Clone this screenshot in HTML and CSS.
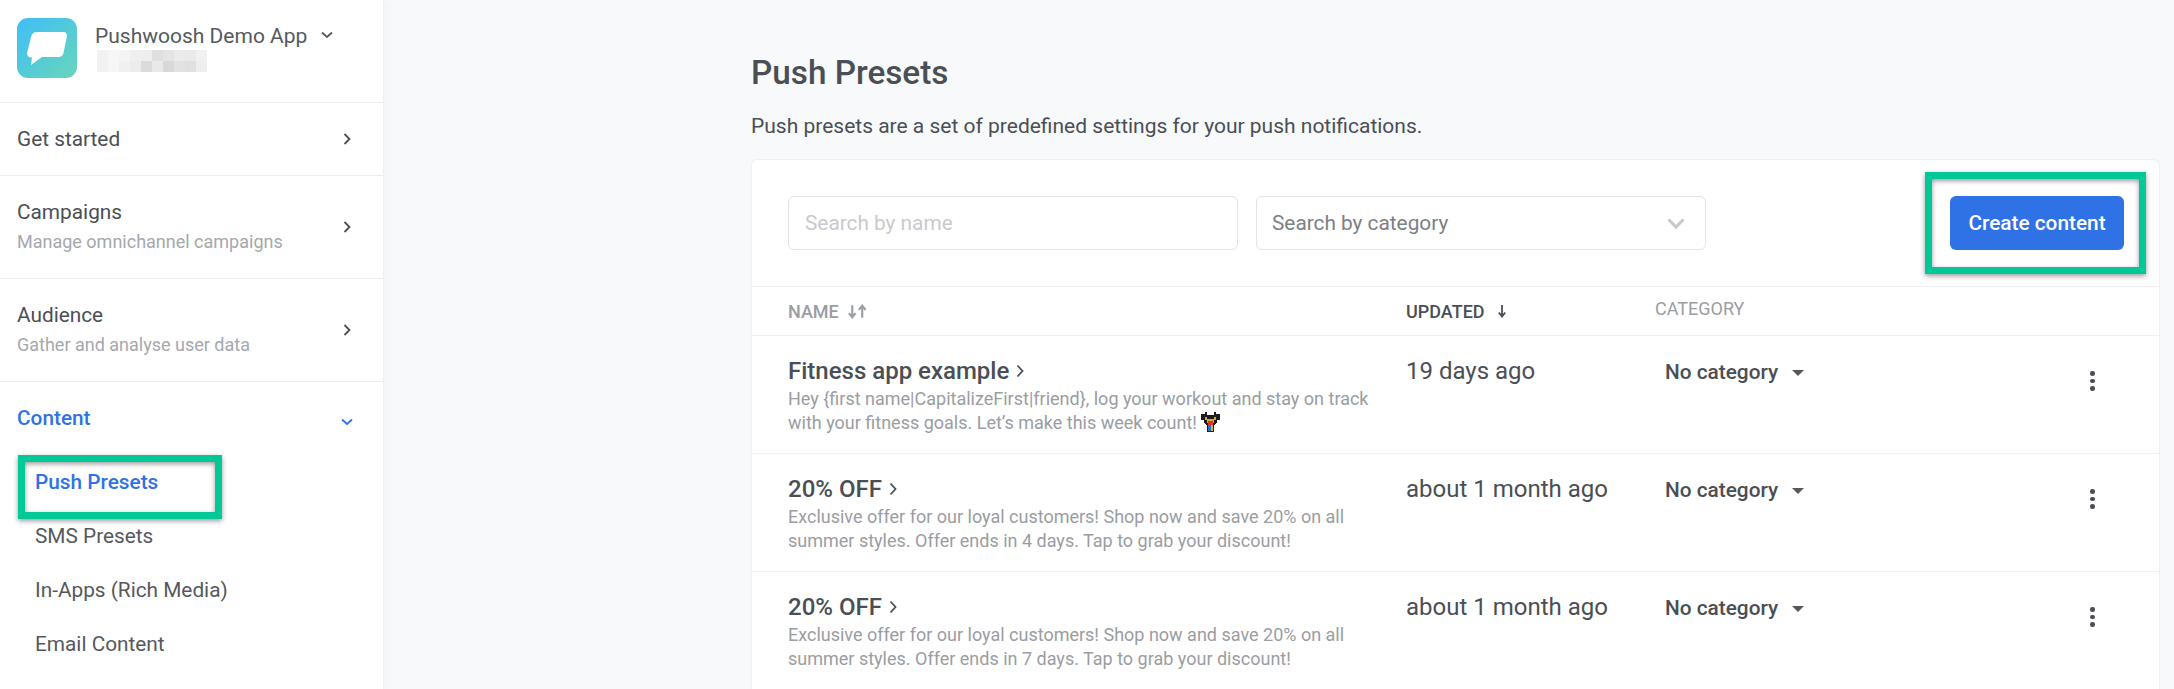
FILE: index.html
```html
<!DOCTYPE html>
<html lang="en">
<head>
<meta charset="utf-8">
<title>Push Presets</title>
<link rel="stylesheet" href="styles.css">
</head>
<body>
<div class="app">
  <aside class="sidebar">
    <header class="brand">
      <svg class="logo" viewBox="0 0 60 60" width="60" height="60">
        <defs><linearGradient id="lg" x1="0" y1="0" x2="1" y2="1"><stop offset="0" stop-color="#3fbef8"/><stop offset="1" stop-color="#68d6ba"/></linearGradient></defs>
        <rect width="60" height="60" rx="11" fill="url(#lg)"/>
        <path d="M20 14H46C49 14 50.500 16 49.800 19L46.500 35C45.900 37.800 44 39 41.500 39H25L14 47L15 39.500C11.500 39.500 9.700 37.500 10.200 34.500L14 19C14.800 15.800 17 14 20 14Z" fill="#fff"/>
      </svg>
      <div class="brand-text">
        <div class="brand-name">Pushwoosh Demo App
          <svg class="brand-caret" viewBox="0 0 12 8" width="12" height="8"><path d="M1 1.500L6 6L11 1.500" fill="none" stroke="#555a60" stroke-width="1.800"/></svg>
        </div>
        <svg class="mosaic" viewBox="0 0 10 2" width="112" height="22" shape-rendering="crispEdges">
          <rect x="0" y="0" width="1" height="1" fill="#f2f2f2"/><rect x="1" y="0" width="1" height="1" fill="#f6f6f6"/><rect x="2" y="0" width="1" height="1" fill="#f4f4f4"/><rect x="3" y="0" width="1" height="1" fill="#efefef"/><rect x="4" y="0" width="1" height="1" fill="#eeeeee"/><rect x="5" y="0" width="1" height="1" fill="#dfdfdf"/><rect x="6" y="0" width="1" height="1" fill="#e4e4e4"/><rect x="7" y="0" width="1" height="1" fill="#ebebeb"/><rect x="8" y="0" width="1" height="1" fill="#eaeaea"/><rect x="9" y="0" width="1" height="1" fill="#f1f1f1"/>
          <rect x="0" y="1" width="1" height="1" fill="#f1f1f1"/><rect x="1" y="1" width="1" height="1" fill="#f6f6f6"/><rect x="2" y="1" width="1" height="1" fill="#f0f0f0"/><rect x="3" y="1" width="1" height="1" fill="#ececec"/><rect x="4" y="1" width="1" height="1" fill="#dbdbdb"/><rect x="5" y="1" width="1" height="1" fill="#e9e9e9"/><rect x="6" y="1" width="1" height="1" fill="#d8d8d8"/><rect x="7" y="1" width="1" height="1" fill="#e2e2e2"/><rect x="8" y="1" width="1" height="1" fill="#e0e0e0"/><rect x="9" y="1" width="1" height="1" fill="#eeeeee"/>
        </svg>
      </div>
    </header>
    <nav>
      <a class="nav-item nav-plain"><span class="nav-label">Get started</span>
        <svg class="nav-chev" viewBox="0 0 8 12" width="8" height="12"><path d="M1.500 1L6.500 6L1.500 11" fill="none" stroke="#4a4f55" stroke-width="1.800"/></svg></a>
      <a class="nav-item nav-tall"><span class="nav-text"><span class="nav-label">Campaigns</span><span class="nav-sub">Manage omnichannel campaigns</span></span>
        <svg class="nav-chev" viewBox="0 0 8 12" width="8" height="12"><path d="M1.500 1L6.500 6L1.500 11" fill="none" stroke="#4a4f55" stroke-width="1.800"/></svg></a>
      <a class="nav-item nav-tall"><span class="nav-text"><span class="nav-label">Audience</span><span class="nav-sub">Gather and analyse user data</span></span>
        <svg class="nav-chev" viewBox="0 0 8 12" width="8" height="12"><path d="M1.500 1L6.500 6L1.500 11" fill="none" stroke="#4a4f55" stroke-width="1.800"/></svg></a>
      <div class="nav-open">
        <div class="nav-open-head"><span class="nav-label nav-active">Content</span>
          <svg class="nav-down" viewBox="0 0 12 8" width="12" height="8"><path d="M1 1.500L6 6L11 1.500" fill="none" stroke="#2f72e6" stroke-width="1.800"/></svg></div>
        <ul class="subnav">
          <li class="subnav-on">Push Presets<span class="mark mark-nav"></span></li>
          <li>SMS Presets</li>
          <li>In-Apps (Rich Media)</li>
          <li>Email Content</li>
        </ul>
      </div>
    </nav>
  </aside>
  <main class="main">
    <h1 class="title">Push Presets</h1>
    <p class="lead">Push presets are a set of predefined settings for your push notifications.</p>
    <section class="card">
      <div class="toolbar">
        <div class="field field-input">Search by name</div>
        <div class="field field-select">Search by category
          <svg viewBox="0 0 18 11" width="18" height="11"><path d="M1.500 1.500L9 9L16.500 1.500" fill="none" stroke="#c6c8cb" stroke-width="3"/></svg>
        </div>
        <div class="btn-wrap"><button class="btn">Create content</button><span class="mark mark-btn"></span></div>
      </div>
      <div class="row-grid thead">
        <div class="th th-muted">NAME
          <svg viewBox="0 0 20 14" width="21" height="15"><path d="M5 1V12M1.800 8.500L5 12.500L8.200 8.500M14.500 13V2M11.300 5.500L14.500 1.500L17.700 5.500" fill="none" stroke="#9a9da2" stroke-width="2"/></svg></div>
        <div class="th th-dark">UPDATED
          <svg viewBox="0 0 10 14" width="10" height="14"><path d="M5 1V12M1.800 8.500L5 12.500L8.200 8.500" fill="none" stroke="#4a4f55" stroke-width="1.800"/></svg></div>
        <div class="th th-muted th-cat">CATEGORY</div>
      </div>

      <article class="row-grid row">
        <div class="cell-name">
          <div class="row-title">Fitness app example <svg viewBox="0 0 8 14" width="8" height="14"><path d="M1.500 1.500L6.500 7L1.500 12.500" fill="none" stroke="#4a4f55" stroke-width="1.800"/></svg></div>
          <p class="row-desc">Hey {first name|CapitalizeFirst|friend}, log your workout and stay on track<br>with your fitness goals. Let’s make this week count! <svg class="emoji" viewBox="0 0 19 20" width="19" height="20" shape-rendering="crispEdges"><path d="M0 2H4V0H6V3H13V0H15V2H19V8H16V11L13 13V20H6V13L3 11V8H0Z" fill="#1c1c1c"/><path d="M4 5H6V7H13V5H15V8H13V11H12V13H7V11H6V8H4Z" fill="#e3a324"/><rect x="7" y="9" width="5" height="4" fill="#d8342b"/><rect x="7" y="13" width="3" height="6" fill="#2b6fc2"/><rect x="10" y="13" width="2" height="6" fill="#e3b02a"/></svg></p>
        </div>
        <div class="cell-date">19 days ago</div>
        <div class="cell-cat">No category <i class="caret"></i></div>
        <div class="cell-more"><i></i><i></i><i></i></div>
      </article>

      <article class="row-grid row">
        <div class="cell-name">
          <div class="row-title">20% OFF <svg viewBox="0 0 8 14" width="8" height="14"><path d="M1.500 1.500L6.500 7L1.500 12.500" fill="none" stroke="#4a4f55" stroke-width="1.800"/></svg></div>
          <p class="row-desc">Exclusive offer for our loyal customers! Shop now and save 20% on all<br>summer styles. Offer ends in 4 days. Tap to grab your discount!</p>
        </div>
        <div class="cell-date">about 1 month ago</div>
        <div class="cell-cat">No category <i class="caret"></i></div>
        <div class="cell-more"><i></i><i></i><i></i></div>
      </article>

      <article class="row-grid row">
        <div class="cell-name">
          <div class="row-title">20% OFF <svg viewBox="0 0 8 14" width="8" height="14"><path d="M1.500 1.500L6.500 7L1.500 12.500" fill="none" stroke="#4a4f55" stroke-width="1.800"/></svg></div>
          <p class="row-desc">Exclusive offer for our loyal customers! Shop now and save 20% on all<br>summer styles. Offer ends in 7 days. Tap to grab your discount!</p>
        </div>
        <div class="cell-date">about 1 month ago</div>
        <div class="cell-cat">No category <i class="caret"></i></div>
        <div class="cell-more"><i></i><i></i><i></i></div>
      </article>
    </section>
  </main>
</div>
</body>
</html>
```
FILE: styles.css
```css
* { box-sizing: border-box; }
html, body { margin: 0; height: 689px; overflow: hidden; }
body { font-family: Roboto, "Liberation Sans", sans-serif; color: #4a4f55; background: #f8f9fb; }
.app { display: flex; height: 689px; }

.sidebar { flex: 0 0 384px; background: #fff; border-right: 1px solid #f0f1f4; box-shadow: 3px 0 8px rgba(60, 70, 90, .03); }
.brand { height: 103px; display: flex; padding: 18px 0 0 17px; gap: 18px; border-bottom: 1px solid #ebecf1; }
.logo { display: block; flex: none; }
.brand-name { display: flex; align-items: center; gap: 14px; font-size: 21px; line-height: 26px; height: 32px; padding-top: 3px; color: #55595e; }
.brand-caret { margin-top: -2px; }
.mosaic { display: block; margin-left: 1px; }

.nav-item { display: flex; align-items: center; justify-content: space-between; padding: 0 32px 0 17px; border-bottom: 1px solid #ebecf1; }
.nav-plain { height: 73px; }
.nav-tall { height: 103px; }
.nav-text { display: flex; flex-direction: column; gap: 7px; margin-top: -1px; }
.nav-label { font-size: 20.800px; line-height: 24px; color: #4a4f55; }
.nav-sub { font-size: 18px; line-height: 22px; color: #a5a8ad; }
.nav-chev { display: block; }
.nav-open-head { display: flex; align-items: center; justify-content: space-between; padding: 11px 30px 0 17px; height: 60px; }
.nav-active { color: #2f72e6; font-weight: 500; }
.nav-down { margin-top: 8px; }
.subnav { list-style: none; margin: 0; padding: 13px 0 0 35px; }
.subnav li { height: 54px; line-height: 54px; font-size: 20.800px; color: #55595e; position: relative; }
.subnav .subnav-on { color: #2f72e6; font-weight: 500; }

.mark { position: absolute; border: 7px solid #00c896; box-shadow: 0 2px 5px rgba(0,0,0,.4), inset 0 2px 5px rgba(0,0,0,.4); pointer-events: none; }
.mark-nav { left: -17px; top: 0; width: 204px; height: 64px; }
.mark-btn { left: -25px; top: -24px; width: 221px; height: 102px; }

.main { flex: 1; padding: 0 14px 0 367px; }
.title { margin: 0; padding-top: 56px; font-size: 33.300px; line-height: 34px; font-weight: 500; color: #4a4f55; }
.lead { margin: 23px 0 0; font-size: 21px; line-height: 26px; color: #4a4f55; }
.card { margin-top: 20px; background: #fff; border: 1px solid #eff0f3; border-bottom: 0; border-radius: 6px 6px 0 0; height: 560px; }

.toolbar { display: flex; height: 127px; padding: 36px 35px 0 36px; border-bottom: 1px solid #eff0f3; }
.field { height: 54px; border: 1.500px solid #e2e3e6; border-radius: 6px; font-size: 20.800px; display: flex; align-items: center; justify-content: space-between; }
.field-input { width: 450px; padding: 0 16px; color: #c8cace; }
.field-select { width: 450px; margin-left: 18px; padding: 0 20px 0 15px; color: #7c8086; }
.btn-wrap { position: relative; margin-left: auto; }
.btn { display: block; width: 174px; height: 54px; border: 0; border-radius: 6px; background: #2f72e6; color: #fff; font: 500 20.800px Roboto, sans-serif; }

.row-grid { display: grid; grid-template-columns: 654px 249px 1fr 69px; }
.thead { height: 49px; align-items: center; border-bottom: 1px solid #eff0f3; }
.th { font-size: 18px; font-weight: 500; display: flex; align-items: center; gap: 8px; }
.th:first-child { padding-left: 36px; }
.th-muted { color: #9a9da2; }
.th-dark { color: #4a4f55; gap: 12px; }
.th-cat { margin-top: -6px; font-weight: 400; }

.row { height: 118px; border-bottom: 1px solid #eff0f3; }
.cell-name { padding: 20px 0 0 36px; }
.row-title { font-size: 24px; line-height: 30px; font-weight: 500; color: #4a4f55; display: flex; align-items: center; gap: 7px; }
.row-desc { margin: 1px 0 0; font-size: 18px; line-height: 24px; color: #9a9da2; }
.emoji { vertical-align: -3px; }
.cell-date { padding-top: 20px; font-size: 24px; line-height: 30px; color: #4a4f55; }
.cell-cat { padding: 21px 0 0 10px; font-size: 20.800px; line-height: 30px; font-weight: 500; color: #4a4f55; }
.caret { display: inline-block; width: 0; height: 0; margin: 0 0 3px 9px; border: 6px solid transparent; border-top: 6px solid #55595e; border-bottom: 0; }
.cell-more { display: flex; flex-direction: column; align-items: flex-start; gap: 3px; padding: 35px 0 0 0; }
.cell-more i { width: 4.500px; height: 4.500px; border-radius: 50%; background: #4a4f55; }
```
